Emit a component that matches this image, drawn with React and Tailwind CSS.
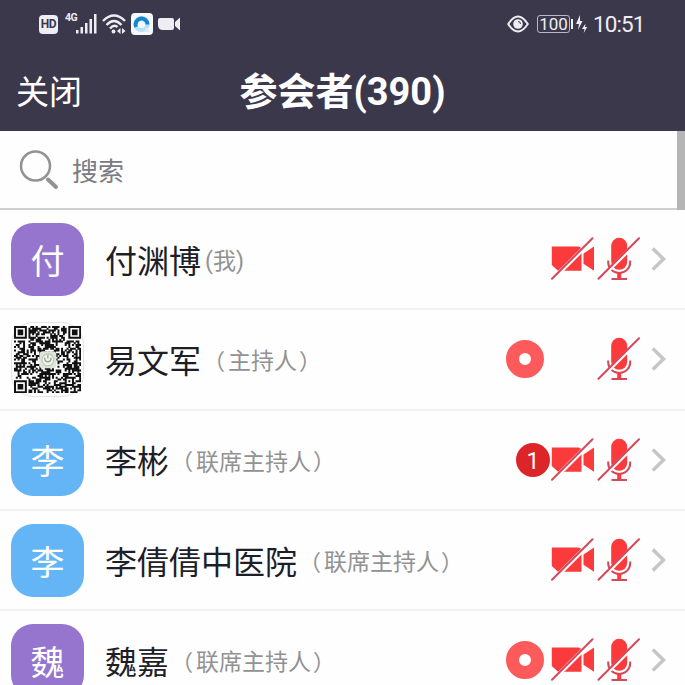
import React from 'react';

const participants = [
  { id: 1, name: '付渊博', role: '我', self: true, avatar: '付', color: 'bg-[#9575cd]', video: true },
  { id: 2, name: '易文军', role: '主持人', qr: true, recording: true },
  { id: 3, name: '李彬', role: '联席主持人', avatar: '李', color: 'bg-[#64b5f6]', hand: 1, video: true },
  { id: 4, name: '李倩倩中医院', role: '联席主持人', avatar: '李', color: 'bg-[#64b5f6]', video: true },
  { id: 5, name: '魏嘉', role: '联席主持人', avatar: '魏', color: 'bg-[#9575cd]', recording: true, video: true },
];

const QR_SIZE = 37;

// Square rings: finder marks in three corners, alignment mark in the fourth
const ringAt = (x, y, cx, cy, reach) => {
  const d = Math.max(Math.abs(x - cx), Math.abs(y - cy));
  if (d > reach) return null;
  return reach === 2 ? d !== 1 : d !== 2 && d !== 4;
};

const buildQrPath = () => {
  let seed = 20391;
  let path = '';
  for (let y = 0; y < QR_SIZE; y++) {
    for (let x = 0; x < QR_SIZE; x++) {
      seed = (seed * 1103515245 + 12345) % 2147483648;
      const mark =
        ringAt(x, y, 3, 3, 4) ??
        ringAt(x, y, 33, 3, 4) ??
        ringAt(x, y, 3, 33, 4) ??
        ringAt(x, y, 30, 30, 2);
      if (mark ?? seed / 2147483648 < 0.54) path += `M${x} ${y}h1.1v1.1h-1.1z`;
    }
  }
  return path;
};

const qrPath = buildQrPath();

function QrAvatar() {
  return (
    <div className="flex h-[75px] w-[73px] items-center justify-center rounded-[22px] border border-[#e4e4e4] bg-white">
      <svg viewBox="0 0 37 37" className="h-[67px] w-[67px]">
        <path d={qrPath} fill="#111" />
        <rect x="14" y="14" width="9.4" height="9.4" rx="2" fill="#dfe5dc" />
        <circle cx="18.7" cy="18.7" r="3.3" fill="#f2f4ef" stroke="#b9c4b8" strokeWidth=".6" />
        <path d="M17 17.500c-.6 3 4 3 3.400 0M18.700 16v2" fill="none" stroke="#8fa08f" strokeWidth=".7" />
      </svg>
    </div>
  );
}

function Avatar({ person }) {
  if (person.qr) return <QrAvatar />;
  return (
    <div className={`flex h-[73px] w-[73px] items-center justify-center rounded-[22px] pt-[5px] text-[34px] leading-none text-white ${person.color}`}>
      {person.avatar}
    </div>
  );
}

function VideoOff() {
  return (
    <svg viewBox="0 0 44 44" className="h-11 w-11">
      <path d="M.8 9.500H27q3.500 0 3.500 3.500v20.800H7L.8 28zM32.500 16.500L43 9.500v24.300l-10.500-7z" fill="#fb3b3b" />
      <path d="M1.500 42.500L42.500 1.500" stroke="#fff" strokeWidth="4.200" />
      <path d="M1 41.800L41.500 1.300" stroke="#d4485a" strokeWidth="2" strokeLinecap="round" />
    </svg>
  );
}

function MicOff() {
  return (
    <svg viewBox="0 0 44 44" className="h-11 w-11">
      <path d="M11.200 23.500v1.800a11 10.700 0 0 0 22 0v-1.800" fill="none" stroke="#d4485a" strokeWidth="2" />
      <path d="M22.200 36v5" stroke="#fb3b3b" strokeWidth="4" />
      <path d="M14.500 42h15.500" stroke="#d4485a" strokeWidth="2" />
      <rect x="14.200" y=".8" width="16" height="32" rx="8" fill="#fb3b3b" />
      <path d="M3 42L42 3" stroke="#fff" strokeWidth="3.600" />
      <path d="M1.500 41.800L42 1.300" stroke="#d4485a" strokeWidth="2" strokeLinecap="round" />
    </svg>
  );
}

function Recording() {
  return (
    <svg viewBox="0 0 38 38" className="h-[38px] w-[38px]">
      <circle cx="19" cy="19" r="12.500" fill="none" stroke="#fd5b5b" strokeWidth="13" />
    </svg>
  );
}

function Chevron() {
  return (
    <svg viewBox="0 0 16 26" className="h-[26px] w-4">
      <path d="M1.800 2.500L12.500 13L1.800 23.500" fill="none" stroke="#c6c6c6" strokeWidth="3.500" />
    </svg>
  );
}

function Role({ person }) {
  if (person.self) return <span>({person.role})</span>;
  return (
    <span className="flex items-center">
      <span className="mr-[3px] -ml-[2px] text-[22px]">（</span>
      {person.role}
      <span className="ml-[2px] text-[22px]">）</span>
    </span>
  );
}

function ParticipantRow({ person }) {
  return (
    <li className="flex h-[100.3px] items-center border-b-2 border-[#f2f2f2] pr-[18px] pl-[11px]">
      <Avatar person={person} />
      <div className="ml-[21px] flex items-center pt-[5px] whitespace-nowrap">
        <span className="text-[32px] leading-none text-[#1e1e28]">{person.name}</span>
        <span className="ml-1 text-[23px] leading-none text-[#929292]">
          <Role person={person} />
        </span>
      </div>
      <div className="ml-auto flex items-center">
        {person.recording && (
          <div className={person.video ? 'mr-[6px]' : 'mr-[53px]'}>
            <Recording />
          </div>
        )}
        {person.hand && (
          <span className="flex h-[34px] w-[34px] items-center justify-center rounded-full bg-[#db2528] pt-[3px] text-[23px] leading-none text-white">
            {person.hand}
          </span>
        )}
        {person.video && <div className="mr-[2px] ml-px"><VideoOff /></div>}
        <MicOff />
        <div className="ml-[10px]"><Chevron /></div>
      </div>
    </li>
  );
}

function StatusBar() {
  return (
    <div className="flex h-12 items-center justify-between pr-10 pl-[39px] text-[#ededf3]">
      <div className="flex items-center">
        <span className="flex h-[19px] w-[19px] items-center justify-center rounded-[4px] bg-[#ededf3] text-[12px] leading-none font-bold tracking-tight text-[#3c384c]">
          HD
        </span>
        <span className="mt-[-11px] ml-[7px] w-[11px] text-[10.5px] leading-none font-bold tracking-tighter">4G</span>
        <svg viewBox="0 0 21 20" className="h-5 w-[21px]" fill="currentColor">
          <path d="M0 16h2.500v3.500H0zM4.500 13h2.500v6.500H4.500zM9 9h2.500v10.500H9zM13.500 5h2.500v14.500h-2.500zM18 0h2.500v19.500H18z" />
        </svg>
        <svg viewBox="0 0 24 20" className="ml-[5px] h-5 w-6" fill="none" stroke="currentColor" strokeWidth="2.400">
          <path d="M1 7Q12-4 23 7M4.500 11Q12 3 19.500 11M8 14.500Q12 10 15.500 13" />
          <circle cx="11.500" cy="17.500" r="1.900" fill="currentColor" stroke="none" />
          <path d="M15 17l3.500-3v6zM23.500 17l-3.500-3v6z" fill="currentColor" stroke="none" />
        </svg>
        <svg viewBox="0 0 22 22" className="ml-[5px] h-[22px] w-[22px]">
          <rect width="22" height="22" rx="4" fill="#f4f9fd" />
          <circle cx="10.500" cy="11" r="6" fill="none" stroke="#b9dff5" strokeWidth="4" />
          <path d="M5 14A6 6 0 1 1 16.500 11.500" fill="none" stroke="#1685cf" strokeWidth="4" />
          <path d="M15 14l4 5h-6z" fill="#d9edf8" />
        </svg>
        <svg viewBox="0 0 23 14" className="ml-[5px] h-3.5 w-[23px]" fill="currentColor">
          <path d="M2 1h12q2 0 2 2v8q0 2-2 2H5q-5 0-5-5V3q0-2 2-2zM17 5l5-4.500v13L17 9z" />
        </svg>
      </div>
      <div className="flex items-center">
        <svg viewBox="0 0 22 18" className="h-[18px] w-[22px]">
          <path d="M1.200 9Q11-6 20.800 9Q11 24 1.200 9z" fill="none" stroke="currentColor" strokeWidth="2" />
          <circle cx="11" cy="9" r="4.800" fill="currentColor" />
          <path d="M11 6.500a2.500 2.500 0 0 1 2.500 2.500" fill="none" stroke="#3c384c" />
        </svg>
        <span className="ml-[8px] flex h-[18px] w-[33px] items-center justify-center rounded-[3px] border border-[#b9b7c4] text-[17px] leading-none">
          100
        </span>
        <span className="ml-px h-2.5 w-[2px] bg-[#ededf3]" />
        <svg viewBox="0 0 12 18" className="ml-[3px] h-[18px] w-3" fill="currentColor">
          <path d="M4 0L0 9h3l-1 6 4.500-9H4zM9.500 8.500L6 14h2.500l-.8 4 3.500-6H9z" />
        </svg>
        <span className="ml-[5px] w-[52px] text-[22.5px] leading-none tracking-[-0.9px]">10:51</span>
      </div>
    </div>
  );
}

function App() {
  return (
    <div className="h-[685px] w-[685px] overflow-hidden bg-[#fefefe] font-[Roboto,'Noto_Sans_CJK_SC',sans-serif]">
      <header className="h-[131px] bg-[#3c384c]">
        <StatusBar />
        <div className="grid h-[83px] grid-cols-[1fr_auto_1fr] items-center px-4 pt-[5px] text-white">
          <button className="justify-self-start text-[33px] leading-none">关闭</button>
          <h1 className="text-[38px] leading-none font-bold">参会者(390)</h1>
        </div>
      </header>

      <div className="flex h-[79px] items-center border-b-2 border-[#cfcfcf]">
        <svg viewBox="0 0 40 40" className="ml-[19px] h-10 w-10" fill="none" stroke="#929292">
          <circle cx="16.500" cy="16" r="14.500" strokeWidth="2.500" />
          <path d="M29 29.500L37 37" strokeWidth="4" strokeLinecap="round" />
        </svg>
        <span className="ml-[13px] pt-[4px] text-[26px] leading-none text-[#7b7b84]">搜索</span>
        <div className="ml-auto h-[79px] w-2 shrink-0 self-start bg-[#b5b5b5]" />
      </div>

      <ul>
        {participants.map(person => (
          <ParticipantRow key={person.id} person={person} />
        ))}
      </ul>
    </div>
  );
}

export default App;
